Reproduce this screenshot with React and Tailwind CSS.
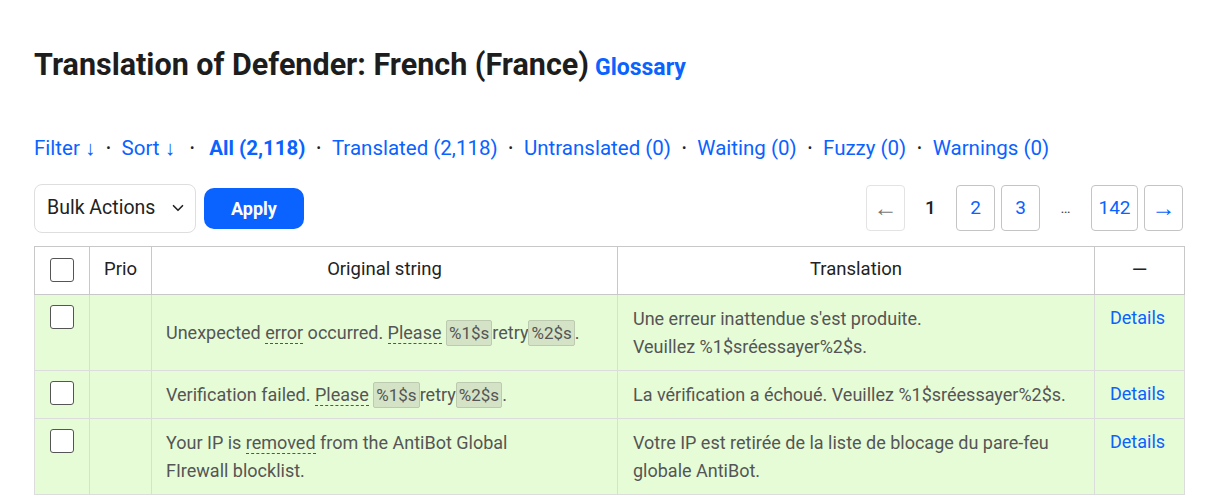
import { ChevronDown } from 'lucide-react'

const Term = ({ children }) => (
  <span className='border-b border-dashed border-[#555]'>{children}</span>
)

const Code = ({ children }) => (
  <span className='inline-block bg-[#d4e3c6] border border-[#bccbb0] rounded-[2px] px-[2px] text-[17px] leading-[24px] text-[#555]'>{children}</span>
)

const Checkbox = () => (
  <span className='block w-[24px] h-[24px] border-[1.5px] border-[#555] rounded-[3px] bg-white mx-auto'></span>
)

const Dot = ({ wide }) => (
  <span className={`text-[#222] text-[13px] ${wide ? 'mx-[15px]' : 'mx-[11px]'}`}>•</span>
)

const FilterBar = () => {
  const tabs = ['Translated (2,118)', 'Untranslated (0)', 'Waiting (0)', 'Fuzzy (0)', 'Warnings (0)']
  return (
    <div className='flex items-center text-[20.5px] text-[#0a62ff] mt-[45px]'>
      <span>Filter ↓</span>
      <Dot />
      <span>Sort ↓</span>
      <Dot wide />
      <span className='font-bold'>All (2,118)</span>
      {tabs.map((t, i) => (
        <span key={i} className='flex items-center'>
          <Dot />
          <span>{t}</span>
        </span>
      ))}
    </div>
  )
}

const PageBox = ({ children, disabled, wide }) => (
  <span className={`${wide ? 'w-[47px]' : 'w-[39px]'} h-[46px] flex items-center justify-center rounded-[4px] border ${disabled ? 'border-[#e3e3e3] text-[#777]' : 'border-[#c4c4c4] text-[#0a62ff]'}`}>
    {children}
  </span>
)

const Toolbar = () => (
  <div className='flex items-center justify-between mt-[20px]'>
    <div className='flex items-center gap-[8px]'>
      <div className='w-[162px] h-[49px] border border-[#dedede] rounded-[8px] flex items-center justify-between pl-[12px] pr-[8px] text-[19.5px] text-[#222]'>
        <span>Bulk Actions</span>
        <ChevronDown size={18} strokeWidth={2.2} />
      </div>
      <button className='w-[100px] h-[41px] bg-[#0a62ff] rounded-[10px] text-white font-bold text-[18px]'>Apply</button>
    </div>
    <div className='flex items-center gap-[6px] text-[19px] mr-[1px]'>
      <PageBox disabled><span className='text-[24px] leading-none'>←</span></PageBox>
      <span className='w-[39px] text-center text-[#222] font-medium'>1</span>
      <PageBox>2</PageBox>
      <PageBox>3</PageBox>
      <span className='w-[39px] text-center text-[#444] text-[15px]'>…</span>
      <PageBox wide>142</PageBox>
      <PageBox><span className='text-[24px] leading-none'>→</span></PageBox>
    </div>
  </div>
)

const rows = [
  {
    original: (
      <>Unexpected <Term>error</Term> occurred. <Term>Please</Term> <Code>%1$s</Code>retry<Code>%2$s</Code>.</>
    ),
    translation: <>Une erreur inattendue s'est produite.<br />Veuillez %1$sréessayer%2$s.</>
  },
  {
    original: (
      <>Verification failed. <Term>Please</Term> <Code>%1$s</Code>retry<Code>%2$s</Code>.</>
    ),
    translation: <>La vérification a échoué. Veuillez %1$sréessayer%2$s.</>
  },
  {
    original: (
      <>Your IP is <Term>removed</Term> from the AntiBot Global<br />FIrewall blocklist.</>
    ),
    translation: <>Votre IP est retirée de la liste de blocage du pare-feu<br />globale AntiBot.</>
  }
]

const StringsTable = () => (
  <table className='w-[1150px] mt-[13px] border-collapse table-fixed text-[18px]'>
    <colgroup>
      <col className='w-[55px]' />
      <col className='w-[62px]' />
      <col className='w-[466px]' />
      <col className='w-[477px]' />
      <col className='w-[90px]' />
    </colgroup>
    <thead>
      <tr className='h-[48px] text-[#222] text-[18.5px]'>
        <th className='border border-[#c8c8c8] font-normal'><Checkbox /></th>
        <th className='border border-[#c8c8c8] font-normal'>Prio</th>
        <th className='border border-[#c8c8c8] font-normal'>Original string</th>
        <th className='border border-[#c8c8c8] font-normal'>Translation</th>
        <th className='border border-[#c8c8c8] font-normal text-[20px]'>—</th>
      </tr>
    </thead>
    <tbody>
      {rows.map((row, i) => (
        <tr key={i} className='bg-[#e6fcd7] text-[#555] leading-[28px]'>
          <td className='border border-[#dcdcdc] align-top pt-[10px]'><Checkbox /></td>
          <td className='border border-[#dcdcdc]'></td>
          <td className='border border-[#dcdcdc] align-middle px-[14px] pt-[10px] pb-[9px]'>{row.original}</td>
          <td className='border border-[#dcdcdc] align-top px-[15px] pt-[10px] pb-[9px]'>{row.translation}</td>
          <td className='border border-[#dcdcdc] align-top px-[15px] py-[9px] text-[#0a62ff]'>Details</td>
        </tr>
      ))}
    </tbody>
  </table>
)

const App = () => {
  return (
    <div className="w-[1220px] h-[496px] overflow-hidden bg-white pl-[34px] pt-[42px] font-['Roboto',sans-serif]">
      <div className='w-[1150px]'>
        <h1 className='flex items-baseline gap-[6px]'>
          <span className='text-[30.5px] font-bold text-[#1d1d1d]'>Translation of Defender: French (France)</span>
          <span className='text-[23px] font-bold text-[#0a62ff]'>Glossary</span>
        </h1>
        <FilterBar />
        <Toolbar />
        <StringsTable />
      </div>
    </div>
  )
}

export default App
